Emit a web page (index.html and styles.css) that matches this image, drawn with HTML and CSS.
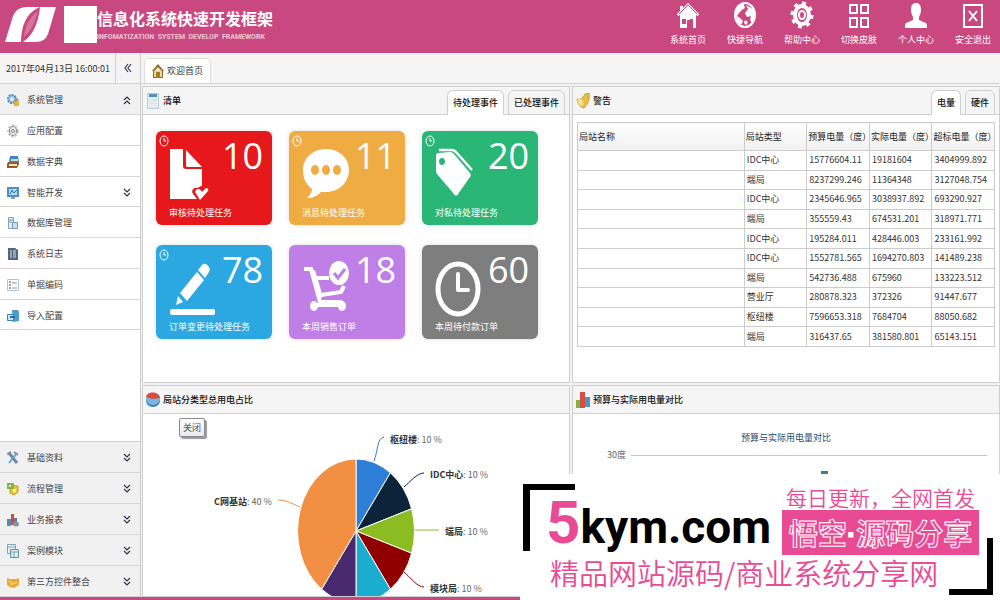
FILE: index.html
```html
<!DOCTYPE html>
<html lang="zh">
<head>
<meta charset="utf-8">
<title>信息化系统快速开发框架</title>
<link rel="stylesheet" href="styles.css">
</head>
<body>
<svg class="defs" aria-hidden="true">
  <symbol id="mini-clock" viewBox="0 0 10 12"><ellipse cx="5" cy="6" rx="4" ry="5" fill="none" stroke="currentColor"/><path d="M5 3v3h2" fill="none" stroke="currentColor"/></symbol>
  <symbol id="down" viewBox="0 0 8 10"><path d="M1 1l3 3 3-3M1 5l3 3 3-3" fill="none" stroke="currentColor" stroke-width="1.2"/></symbol>
  <symbol id="up" viewBox="0 0 8 10"><path d="M1 5l3-3 3 3M1 9l3-3 3 3" fill="none" stroke="currentColor" stroke-width="1.2"/></symbol>
</svg>
<div class="app">
  <header class="banner">
    <svg class="logo" viewBox="0 0 52 36"><path fill="#fff" d="M0 35L8 9Q11 1 20 0H51L43 27Q40 35 31 35z"/><path fill="#c9487f" d="M35 0C23 5 16 16 16 36C27 30 33 18 35 0z"/><path fill="#fff" d="M33 4C25 10 20 18 19 30C26 24 30 15 33 4z" opacity=".25"/></svg>
    <div class="mask"></div>
    <div class="brand">
      <h1>信息化系统快速开发框架</h1>
      <p>INFOMATIZATION&nbsp; SYSTEM&nbsp; DEVELOP&nbsp; FRAMEWORK</p>
    </div>
    <nav class="topnav">
      <a href="#"><svg viewBox="0 0 24 28"><path fill="#fff" d="M12 2l11 11-1 2-2-1v13h-6v-8h-3v8H4V14l-2 1-1-2 3-3V5h3v2z"/><path d="M3 13l9-9 9 9" fill="none" stroke="#c9487f"/><path fill="#c9487f" d="M6 18h4v5H6zM14 18h3v9h-3z"/></svg>系统首页</a>
      <a href="#"><svg viewBox="0 0 24 28"><ellipse cx="12" cy="14" rx="10" ry="12" fill="none" stroke="#fff" stroke-width="2"/><path fill="#fff" d="M11 3C6 3 3 8 3 14c0 4 2 8 5 10l2-4-3-3-3-2 2-3 3-3 3-2-1-3zM13 4l7 4 2 6-3 8-2-3 1-4-4 1-2-4 3-4zM12 19l3 2-2 3-2-2z"/></svg>快捷导航</a>
      <a href="#"><svg viewBox="0 0 24 28"><ellipse cx="12" cy="14" rx="7" ry="9" fill="none" stroke="#fff" stroke-width="4"/><ellipse cx="12" cy="14" rx="10" ry="12" fill="none" stroke="#fff" stroke-width="3" stroke-dasharray="4 4.6"/><ellipse cx="12" cy="14" rx="3" ry="4" fill="none" stroke="#fff" stroke-width="2"/></svg>帮助中心</a>
      <a href="#"><svg viewBox="0 0 24 28"><path d="M3 4h7v8H3zM14 4h7v8h-7zM3 17h7v9H3zM14 17h7v9h-7z" fill="none" stroke="#fff" stroke-width="2"/></svg>切换皮肤</a>
      <a href="#"><svg viewBox="0 0 24 28"><path fill="#fff" d="M12 2c4 0 5 3 5 7 0 3-1 5-2 7v3l7 3c1 1 1 3 1 5H1c0-2 0-4 1-5l7-3v-3C8 14 7 12 7 9c0-4 1-7 5-7z"/></svg>个人中心</a>
      <a href="#"><svg viewBox="0 0 24 28"><path d="M3 4h18v22H3z" fill="none" stroke="#fff" stroke-width="2"/><path d="M8 10l8 10M16 10L8 20" stroke="#fff" stroke-width="2"/></svg>安全退出</a>
    </nav>
  </header>

  <div class="strip">
    <time>2017年04月13日 16:00:01</time>
    <button class="collapse" aria-label="收起"><svg viewBox="0 0 8 10"><path d="M4 1L1 5l3 4M7 1L4 5l3 4" fill="none" stroke="#333b55" stroke-width="1.2"/></svg></button>
    <a class="page-tab" href="#"><svg viewBox="0 0 12 14"><path fill="#8a6a35" d="M6 0l6 7h-1v7H1V7H0z"/><path fill="#f3d58a" d="M6 3l4 4v6H2V7z"/><path fill="#a8792f" d="M4 8h4v6H4z"/><path fill="#fff" d="M5 5h2v2H5z"/></svg>欢迎首页</a>
  </div>

  <div class="work">
    <aside class="side">
      <button class="row section"><svg class="ico" viewBox="0 0 12 14"><circle cx="5" cy="6" r="4" fill="#9fc9ee" stroke="#4a86c0" stroke-width="2" stroke-dasharray="2 1"/><circle cx="5" cy="6" r="1.5" fill="#fff"/><path fill="#e3b23a" d="M7 8h5v5H7z"/><path d="M8 8V6h3v2" fill="none" stroke="#b48a28"/></svg><span>系统管理</span><svg class="arrow"><use href="#up"/></svg></button>
      <a class="row" href="#"><svg class="ico" viewBox="0 0 12 14"><ellipse cx="6" cy="7" rx="3.5" ry="4.5" fill="#eee" stroke="#888"/><ellipse cx="6" cy="7" rx="5" ry="6" fill="none" stroke="#888" stroke-dasharray="2 2"/><circle cx="6" cy="7" r="1.5" fill="none" stroke="#888"/></svg><span>应用配置</span></a>
      <a class="row" href="#"><svg class="ico" viewBox="0 0 12 14"><path fill="#3f86c4" d="M3 1h8l1 6H2z"/><path fill="#b9dcf3" d="M4 4h7v2H4z"/><path fill="#9b5a2c" d="M1 7h11v2l-2 4H0V9z"/><path fill="#f2dfc0" d="M2 9h8v2H2z"/></svg><span>数据字典</span></a>
      <button class="row"><svg class="ico" viewBox="0 0 12 14"><path fill="#4b8fcb" d="M0 1h12v10H0z"/><path fill="#b5daf2" d="M2 3h8v6H2z"/><path d="M3 8l2-4 2 3 3-3" fill="none" stroke="#2c6ca8"/><path fill="#999" d="M4 11h4v2H4z"/></svg><span>智能开发</span><svg class="arrow"><use href="#down"/></svg></button>
      <a class="row" href="#"><svg class="ico" viewBox="0 0 12 14"><path fill="#e1edf7" stroke="#86a4bf" d="M1.500 1.500h5v11h-5z"/><path fill="#c9dff2" stroke="#7496b8" d="M5.500 6.500h5v6h-5z"/><path stroke="#7496b8" d="M2 4h4M2 6h3"/></svg><span>数据库管理</span></a>
      <a class="row" href="#"><svg class="ico" viewBox="0 0 12 14"><path fill="#52677e" d="M1 1h7l3 2v10H1z"/><path d="M3 4h2M6 4h3M3 6h2M6 6h3M3 8h2M6 8h3M3 10h2M6 10h3" stroke="#d4e2ee"/></svg><span>系统日志</span></a>
      <a class="row" href="#"><svg class="ico" viewBox="0 0 12 14"><path fill="#fff" stroke="#b0c4d4" d="M.5 1.500h11v11H.5z"/><path d="M2 4h2M2 7h2M2 10h2" stroke="#345"/><path d="M5 5h5M5 10h5" stroke="#79a"/></svg><span>单据编码</span></a>
      <a class="row" href="#"><svg class="ico" viewBox="0 0 12 14"><path fill="#4e9ccb" d="M5 1h6l1 2v9l-6 1z"/><path fill="#c5e4f5" stroke="#3482b4" d="M.5 5.500h6v6h-6z"/><path d="M3 8h5" stroke="#27709e" stroke-width="2"/></svg><span>导入配置</span></a>
      <div class="sections">
        <button class="row section"><svg class="ico" viewBox="0 0 12 14"><path d="M2 2l8 10" stroke="#6c8ba5" stroke-width="3"/><path d="M10 2L2 12" stroke="#5ba3d0" stroke-width="2"/><path d="M7 1l4 3M0 3l4-2" stroke="#7a95a8" stroke-width="2"/></svg><span>基础资料</span><svg class="arrow"><use href="#down"/></svg></button>
        <button class="row section"><svg class="ico" viewBox="0 0 12 14"><path fill="#efc63d" stroke="#c09a26" d="M3 3l8 1v6l-4 3-4-2z"/><path fill="#7bbb3f" d="M0 1h7v6H0z"/><path fill="#eaf6d8" d="M2 3h2v2H2z"/><path fill="#fff2b8" d="M6 7h3v3H6z"/></svg><span>流程管理</span><svg class="arrow"><use href="#down"/></svg></button>
        <button class="row section"><svg class="ico" viewBox="0 0 12 14"><path fill="#5b87b8" d="M0 6h4v7H0z"/><path fill="#d04a41" d="M4 1h3v11H4z"/><path fill="#697889" d="M7 5h3v8H7z"/><ellipse cx="9" cy="11" rx="3" ry="2.500" fill="#8793a8"/></svg><span>业务报表</span><svg class="arrow"><use href="#down"/></svg></button>
        <button class="row section"><svg class="ico" viewBox="0 0 12 14"><path fill="#e6f1f5" stroke="#7fa3b3" d="M.5.5h8v9h-8z"/><path fill="#d9eaf0" stroke="#6793a7" d="M3.500 5.500h8v8h-8z"/><path d="M1 3h7M4 8h7M7 8v5" stroke="#7fa3b3"/></svg><span>案例模块</span><svg class="arrow"><use href="#down"/></svg></button>
        <button class="row section"><svg class="ico" viewBox="0 0 12 14"><path fill="#e9a932" d="M0 3l3 1h6l3-1v7l-5 3-4-1-3-2z"/><path d="M2 6l4 3 4-2M4 10l3-2" fill="none" stroke="#fbe3a4"/></svg><span>第三方控件整合</span><svg class="arrow"><use href="#down"/></svg></button>
      </div>
    </aside>

    <main class="panels">
      <section class="panel">
        <div class="panel-head">
          <svg class="pico" viewBox="0 0 14 16"><path fill="#e7eef1" stroke="#bccbd0" d="M1.500.5h11v15h-11z"/><path fill="#4e92c4" d="M3 1h8v3H3z"/><path fill="#d3e5ee" d="M3 6h8v2H3zM3 10h8v1H3z"/></svg>
          <h2>清单</h2>
          <div class="tabs"><button class="tab on">待处理事件</button><button class="tab">已处理事件</button></div>
        </div>
        <div class="cards">
          <a class="card red" href="#"><svg viewBox="0 0 66 76"><use href="#mini-clock" x="3" y="4" width="10" height="12"/><path fill="#fff" d="M14 18h13v17c0 2 1 3 3 3h16v17c-2 0-3 1-4 2-5-1-7 3-5 6l4 5H14zM30 19l16 17H31l-1-1z"/><path fill="#fff" d="M39 61c1-4 5-4 7 0l4-4c2 0 3 2 2 3l-8 9z"/></svg><b>10</b><span>审核待处理任务</span></a>
          <a class="card orange" href="#"><svg viewBox="0 0 66 76"><use href="#mini-clock" x="3" y="4" width="10" height="12"/><path fill="#fff" d="M37 18c13 0 23 9 23 21S50 61 37 61h-5c-4 4-8 6-14 6 3-3 5-6 5-9-6-4-9-11-9-19 0-12 10-21 23-21z"/><g fill="#eeac43"><ellipse cx="26" cy="39" rx="4" ry="5"/><ellipse cx="37" cy="39" rx="4" ry="5"/><ellipse cx="48" cy="39" rx="4" ry="5"/></g></svg><b>11</b><span>消息待处理任务</span></a>
          <a class="card green" href="#"><svg viewBox="0 0 66 76"><use href="#mini-clock" x="3" y="4" width="10" height="12"/><path fill="#fff" fill-rule="evenodd" d="M16 22l12-1c2 0 3 1 4 2l16 19c1 2 1 3 0 4L36 63c-1 2-3 2-4 0L15 43l-1-2V25c0-2 1-3 2-3zm4 5c-4 0-4 7 0 7s4-7 0-7z"/><path d="M17 19h13c2 0 3 1 4 2l16 18" fill="none" stroke="#fff" stroke-width="2.500"/></svg><b>20</b><span>对私待处理任务</span></a>
          <a class="card blue" href="#"><svg viewBox="0 0 66 76"><use href="#mini-clock" x="3" y="4" width="10" height="12"/><path fill="#fff" d="M20 60l2-9 5 6zM24 48l17-21 7 8-17 21zM42 25l4-5c3-4 10 3 7 7l-4 6z"/><rect x="14" y="64" width="45" height="6" rx="2" fill="#fff"/></svg><b>78</b><span>订单变更待处理任务</span></a>
          <a class="card purple" href="#"><svg viewBox="0 0 66 76"><path d="M15 24h7l9 33h22M27 33h13M32 50l20-3 3-6" fill="none" stroke="#fff" stroke-width="4"/><path fill="#fff" d="M22 26l4-1 8 27-5 2z"/><ellipse cx="25" cy="61" rx="4" ry="5" fill="#fff"/><ellipse cx="53" cy="61" rx="4" ry="5" fill="#fff"/><ellipse cx="50" cy="28" rx="10" ry="12" fill="#fff"/><path d="M45 28l4 5 7-9" fill="none" stroke="#bd7ee6" stroke-width="3"/><path d="M25 60h28" stroke="#fff" stroke-width="4"/></svg><b>18</b><span>本周销售订单</span></a>
          <a class="card gray" href="#"><svg viewBox="0 0 66 76"><ellipse cx="36" cy="44" rx="20" ry="25" fill="none" stroke="#fff" stroke-width="5"/><path d="M36 29v16h10" fill="none" stroke="#fff" stroke-width="4" stroke-linecap="round" stroke-linejoin="round"/></svg><b>60</b><span>本周待付款订单</span></a>
        </div>
      </section>

      <section class="panel">
        <div class="panel-head">
          <svg class="pico" viewBox="0 0 14 16"><path fill="#e9bd45" stroke="#c99a2c" d="M1 6c3 1 6-1 8-5l4-1c1 6-1 11-5 15-3 0-7-5-7-9z"/><ellipse cx="4.500" cy="9" rx="2.500" ry="4" fill="#f9e09a" transform="rotate(-30 4.500 9)"/></svg>
          <h2>警告</h2>
          <div class="tabs"><button class="tab on">电量</button><button class="tab">硬件</button></div>
        </div>
        <div class="table-box">
          <table>
            <colgroup><col class="c-name"><col class="c-num"><col class="c-num"><col class="c-num"><col class="c-num"></colgroup>
            <thead><tr><th>局站名称</th><th>局站类型</th><th>预算电量（度）</th><th>实际电量（度）</th><th>超标电量（度）</th></tr></thead>
            <tbody>
              <tr><td></td><td>IDC中心</td><td>15776604.11</td><td>19181604</td><td>3404999.892</td></tr>
              <tr><td></td><td>端局</td><td>8237299.246</td><td>11364348</td><td>3127048.754</td></tr>
              <tr><td></td><td>IDC中心</td><td>2345646.965</td><td>3038937.892</td><td>693290.927</td></tr>
              <tr><td></td><td>端局</td><td>355559.43</td><td>674531.201</td><td>318971.771</td></tr>
              <tr><td></td><td>IDC中心</td><td>195284.011</td><td>428446.003</td><td>233161.992</td></tr>
              <tr><td></td><td>IDC中心</td><td>1552781.565</td><td>1694270.803</td><td>141489.238</td></tr>
              <tr><td></td><td>端局</td><td>542736.488</td><td>675960</td><td>133223.512</td></tr>
              <tr><td></td><td>营业厅</td><td>280878.323</td><td>372326</td><td>91447.677</td></tr>
              <tr><td></td><td>枢纽楼</td><td>7596653.318</td><td>7684704</td><td>88050.682</td></tr>
              <tr><td></td><td>端局</td><td>316437.65</td><td>381580.801</td><td>65143.151</td></tr>
            </tbody>
          </table>
        </div>
      </section>

      <section class="panel">
        <div class="panel-head">
          <svg class="pico" viewBox="0 0 14 16"><ellipse cx="7" cy="9" rx="7" ry="6" fill="#3c7fb5"/><ellipse cx="7" cy="7" rx="7" ry="6" fill="#79b5df"/><path fill="#dc4c3e" d="M7 7L0 5c1-6 13-6 14 1z"/></svg>
          <h2>局站分类型总用电占比</h2>
        </div>
        <div class="chart">
          <svg class="pie" viewBox="0 0 426 190" width="426" height="190">
            <g stroke="#fff">
              <path fill="#2f7ed8" d="M213 117V45A58.500 72 0 0 1 247.400 58.800z"/>
              <path fill="#0d233a" d="M213 117L247.400 58.800A58.500 72 0 0 1 268.600 94.800z"/>
              <path fill="#8bbc21" d="M213 117L268.600 94.800A58.500 72 0 0 1 268.600 139.200z"/>
              <path fill="#910000" d="M213 117L268.600 139.200A58.500 72 0 0 1 247.400 175.200z"/>
              <path fill="#1aadce" d="M213 117L247.400 175.200A58.500 72 0 0 1 213 189z"/>
              <path fill="#492970" d="M213 117V189A58.500 72 0 0 1 178.600 175.200z"/>
              <path fill="#f28f43" d="M213 117L178.600 175.200A58.500 72 0 0 1 213 45z"/>
            </g>
            <g fill="none">
              <path stroke="#2f7ed8" d="M231 47c4-10 3-23 10-24"/>
              <path stroke="#0d233a" d="M261 73c6-5 13-14 20-14"/>
              <path stroke="#8bbc21" d="M272 116h24"/>
              <path stroke="#910000" d="M261 158c6 5 13 15 20 15"/>
              <path stroke="#f28f43" d="M157 93c-7-3-14-7-22-7"/>
            </g>
            <g class="labels">
              <text x="247" y="29"><tspan>枢纽楼</tspan>: 10 %</text>
              <text x="287" y="64"><tspan>IDC中心</tspan>: 10 %</text>
              <text x="302" y="121"><tspan>端局</tspan>: 10 %</text>
              <text x="287" y="178"><tspan>模块局</tspan>: 10 %</text>
              <text x="71" y="91"><tspan>C网基站</tspan>: 40 %</text>
            </g>
          </svg>
          <div class="tip">关闭</div>
        </div>
      </section>

      <section class="panel">
        <div class="panel-head">
          <svg class="pico" viewBox="0 0 14 16"><path fill="#80b23d" d="M0 8h5v8H0z"/><path fill="#d94e42" d="M4 0h5v16H4z"/><path fill="#4a96c9" d="M9 5h5v10H9z"/></svg>
          <h2>预算与实际用电量对比</h2>
        </div>
        <div class="chart bars">
          <h3>预算与实际用电量对比</h3>
          <div class="scale"><span>30度</span><i></i></div>
          <svg class="column" viewBox="0 0 40 40"><path fill="#3f7ba5" d="M18 1h7v3h2v36H16V4h2z"/></svg>
        </div>
      </section>
    </main>
  </div>
</div>

<div class="promo">
  <div class="corner start"></div>
  <div class="corner end"></div>
  <div class="promo-top">
    <div class="site"><em>5</em>kym.com</div>
    <div class="slogan">
      <p>每日更新，全网首发</p>
      <strong>悟空<i>·</i>源码分享</strong>
    </div>
  </div>
  <p class="promo-line">精品网站源码/商业系统分享网</p>
</div>
</body>
</html>
```
FILE: styles.css
```css
* { box-sizing: border-box; margin: 0; padding: 0; }
body {
  font: 9px/12px "Noto Sans CJK SC", sans-serif;
  color: #333;
  background: #fff;
  overflow: hidden;
}
a { color: inherit; text-decoration: none; }
button { font: inherit; color: inherit; border: 0; background: none; cursor: pointer; }
svg { display: block; flex: none; }
.defs { position: absolute; width: 0; height: 0; }

.app { display: flex; flex-direction: column; height: 100vh; border-bottom: 3px solid #c9487f; }

.banner { display: flex; align-items: flex-start; height: 53px; padding: 0 5px; background: #c9487f; color: #fff; }
.logo { width: 52px; height: 36px; margin-top: 7px; }
.mask { width: 33px; height: 37px; margin: 6px 0 0 7px; background: #fff; }
.brand { padding-top: 8px; white-space: nowrap; }
.brand h1 { font-size: 16px; line-height: 20px; font-weight: 700; }
.brand p { font: 700 7px/18px Roboto, sans-serif; color: #f3c6d9; }
.topnav { display: flex; gap: 13px; margin-left: auto; }
.topnav a { display: flex; flex-direction: column; align-items: center; gap: 5px; width: 44px; padding-top: 1px; white-space: nowrap; }
.topnav svg { width: 24px; height: 28px; }

.strip { display: flex; flex: none; align-items: stretch; height: 31px; background: #f5f5f5; border-bottom: 1px solid #d3d3d3; }
.strip time { width: 115px; padding-left: 6px; line-height: 32px; white-space: nowrap; }
.collapse { display: grid; place-items: center; width: 26px; border: solid #d0d0d0; border-width: 0 1px; }
.collapse svg { width: 8px; height: 10px; }
.page-tab { display: flex; align-items: center; gap: 3px; margin: 5px 0 0 3px; padding: 0 7px; background: #fff; border: 1px solid #ddd; border-bottom: 0; border-radius: 5px 5px 0 0; }
.page-tab svg { width: 12px; height: 14px; }

.work { display: flex; flex: 1; min-height: 0; }
.side { display: flex; flex-direction: column; flex: none; width: 141px; border-right: 1px solid #ccc; }
.row { display: flex; align-items: center; gap: 8px; flex: none; width: 100%; height: 31px; padding: 2px 9px 0 7px; border-bottom: 1px solid #d6d6d6; text-align: left; color: #444; }
.side > .row:nth-child(4n) { height: 30px; }
.row.section { background: #f1f1f1; }
.row span { flex: 1; }
.ico { width: 12px; height: 14px; }
.arrow { width: 8px; height: 10px; color: #2c3550; }
.sections { margin-top: auto; border-top: 1px solid #d0d0d0; }

.panels { display: grid; flex: 1; min-width: 0; grid-template: 297px minmax(0, 1fr) / 1fr 1fr; gap: 2px; padding: 2px 0 0 1px; background: #f3f3f3; }
.panel { display: flex; flex-direction: column; min-width: 0; background: #fff; border: 1px solid #cfcfcf; overflow: hidden; }
.panel-head { display: flex; align-items: center; flex: none; gap: 3px; height: 28px; padding: 0 4px 0 3px; background: #f5f5f5; border-bottom: 1px solid #cfcfcf; }
.pico { width: 14px; height: 16px; }
.panel-head h2 { font-size: 9px; font-weight: 500; color: #111; }
.tabs { display: flex; gap: 4px; align-self: flex-end; margin: 0 0 -1px auto; }
.tab { height: 25px; padding: 0 5px; background: #f5f5f5; border: 1px solid #cfcfcf; border-radius: 6px 6px 0 0; color: #111; font-weight: 500; }
.tab.on { background: #fff; border-bottom-color: #fff; }

.cards { display: grid; grid-template-columns: repeat(3, 116px); gap: 20px 17px; padding: 16px 13px; }
.card { display: grid; grid-template: 76px 18px / 66px 1fr; height: 94px; border-radius: 6px; color: #fff; box-shadow: 0 0 5px #ddd; }
.card svg { width: 66px; height: 76px; }
.card b { padding-top: 5px; font: 400 36px/40px "Open Sans", sans-serif; }
.card span { grid-column: 1 / 3; padding-left: 13px; }
.red { background: #e7181b; }
.orange { background: #eeac43; }
.green { background: #2ab677; }
.blue { background: #2ba8e1; }
.purple { background: #bf7fe7; }
.gray { background: #7e7e7e; }

.table-box { padding: 7px 4px; }
table { width: 100%; height: 225px; table-layout: fixed; border-collapse: collapse; }
.c-name { width: 40%; }
.c-num { width: 15%; }
th, td { padding: 0 1px; border: 1px solid #ccc; text-align: left; font-weight: 400; white-space: nowrap; }
th { height: 28px; background: linear-gradient(#fff, #f1f1f1); color: #222; }
td { padding: 0 2px; }

.chart { position: relative; flex: 1; min-height: 0; overflow: hidden; }
.labels { font-size: 9px; fill: #666; }
.labels tspan { font-weight: 700; fill: #333; }
.tip { position: absolute; left: 36px; top: 4px; padding: 2px 3px; background: linear-gradient(#fff, #e8e8f0); border: 1px solid #8a8a8a; border-radius: 2px; box-shadow: 2px 2px 1px #999; line-height: 13px; color: #555; }
.bars { padding-top: 18px; }
.bars h3 { font-size: 9px; font-weight: 400; text-align: center; color: #274b6d; }
.scale { display: flex; align-items: center; gap: 5px; padding: 5px 12px 0 34px; color: #666; }
.scale i { flex: 1; height: 1px; background: #c6c6c6; }
.column { width: 40px; height: 40px; margin: 9px 0 0 230px; }

.promo { position: absolute; right: 0; bottom: 0; width: 480px; height: 126px; padding: 10px 21px 0 26px; background: #fff; color: #e84b94; }
.promo-top { display: flex; justify-content: space-between; height: 71px; }
.site { font: 700 46px/78px Roboto, sans-serif; color: #000; white-space: nowrap; }
.site em { font-style: normal; font-size: 60px; color: #e84b94; }
.slogan { flex: none; width: 197px; padding-top: 1px; white-space: nowrap; }
.slogan p { padding-left: 4px; font-size: 21px; line-height: 25px; font-weight: 350; }
.slogan strong { display: block; height: 45px; background: #e84b94; font-size: 29px; line-height: 44px; text-align: center; -webkit-text-stroke: 1px #fff; }
.slogan i { font-family: "Liberation Sans", sans-serif; font-style: normal; color: #fff; }
.promo-line { padding-left: 4px; font-size: 29px; line-height: 34px; font-weight: 350; white-space: nowrap; }
.corner { position: absolute; border: 0 solid #000; }
.start { left: 3px; top: 10px; width: 52px; height: 67px; border-width: 6px 0 0 7px; }
.end { right: 7px; bottom: 5px; width: 44px; height: 57px; border-width: 0 6px 6px 0; }
```
